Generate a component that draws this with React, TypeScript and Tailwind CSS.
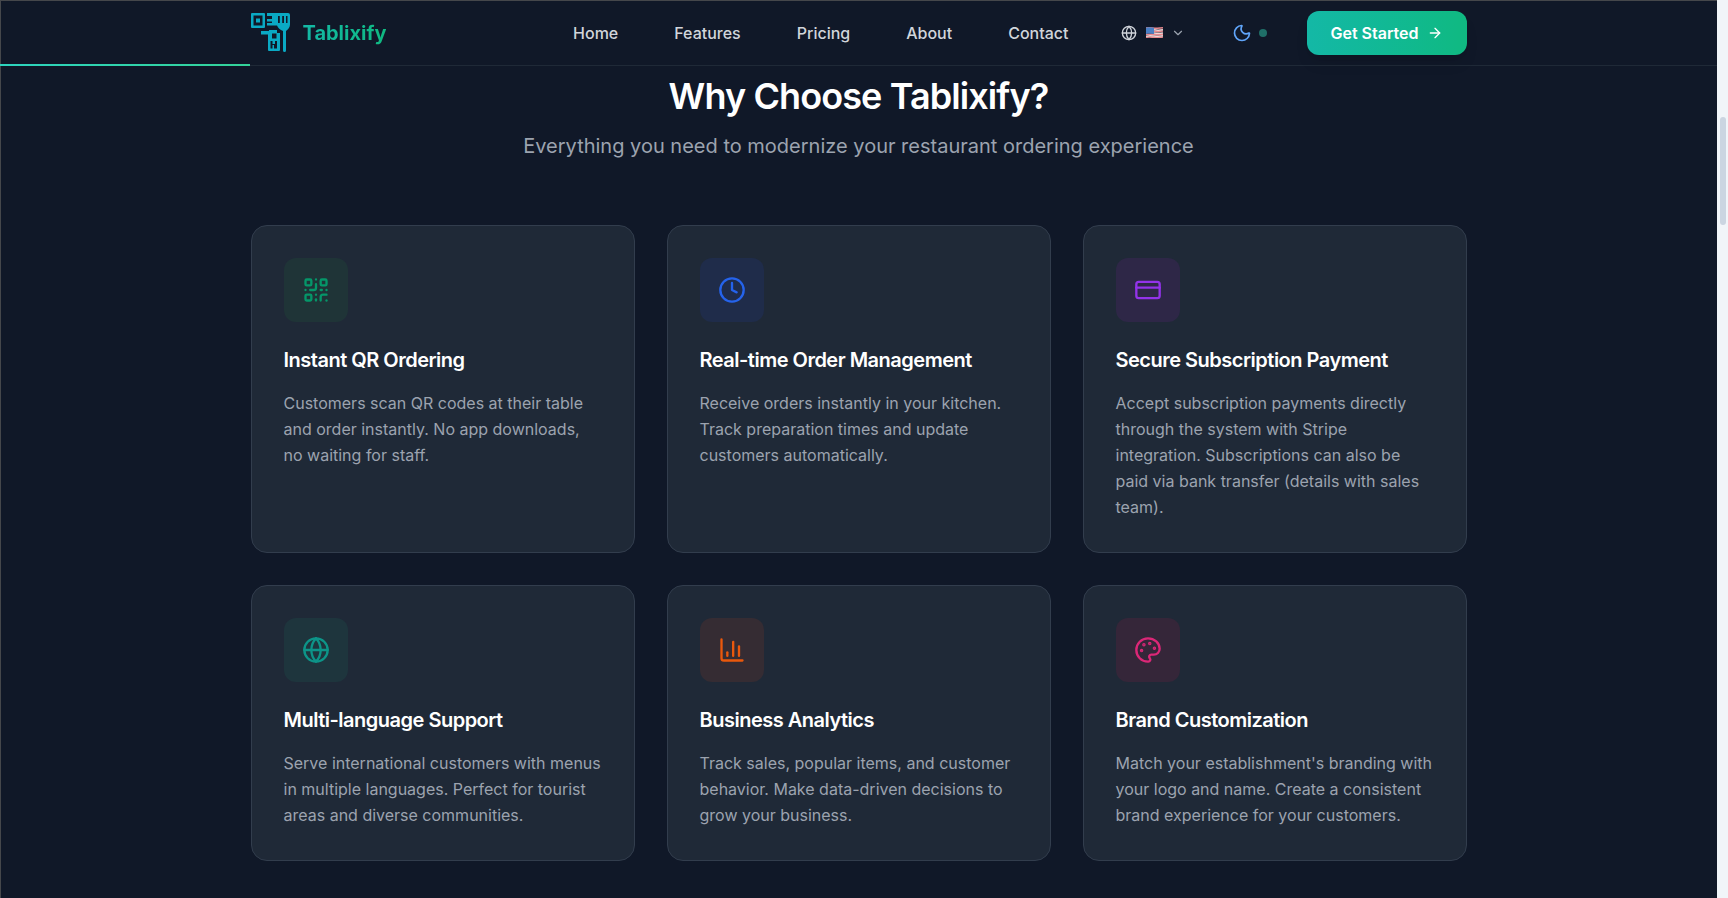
import { ArrowRight, ChartColumn, ChevronDown, Clock, CreditCard, Globe, Moon, Palette, QrCode } from "lucide-react";
import type { ReactNode } from "react";

const features: { title: string; text: string; box: string; icon: ReactNode }[] = [
  {
    title: "Instant QR Ordering",
    text: "Customers scan QR codes at their table and order instantly. No app downloads, no waiting for staff.",
    box: "bg-[#1f3437]",
    icon: <QrCode className="w-7 h-7 text-[#059669]" />,
  },
  {
    title: "Real-time Order Management",
    text: "Receive orders instantly in your kitchen. Track preparation times and update customers automatically.",
    box: "bg-[#1f2c4a]",
    icon: <Clock className="w-7 h-7 text-[#2563eb]" />,
  },
  {
    title: "Secure Subscription Payment",
    text: "Accept subscription payments directly through the system with Stripe integration. Subscriptions can also be paid via bank transfer (details with sales team).",
    box: "bg-[#2e2747]",
    icon: <CreditCard className="w-7 h-7 text-[#9333ea]" />,
  },
  {
    title: "Multi-language Support",
    text: "Serve international customers with menus in multiple languages. Perfect for tourist areas and diverse communities.",
    box: "bg-[#1e353d]",
    icon: <Globe className="w-7 h-7 text-[#0d9488]" />,
  },
  {
    title: "Business Analytics",
    text: "Track sales, popular items, and customer behavior. Make data-driven decisions to grow your business.",
    box: "bg-[#352c33]",
    icon: <ChartColumn className="w-7 h-7 text-[#ea580c]" />,
  },
  {
    title: "Brand Customization",
    text: "Match your establishment's branding with your logo and name. Create a consistent brand experience for your customers.",
    box: "bg-[#352639]",
    icon: <Palette className="w-7 h-7 text-[#db2777]" />,
  },
];

function Logo() {
  return (
    <svg viewBox="0 0 39 39" className="w-[39px] h-[39px] text-[#0aa9c4]" fill="currentColor">
      {/* qr corner */}
      <path fillRule="evenodd" d="M1 0h12a1 1 0 0 1 1 1v13a1 1 0 0 1-1 1H1a1 1 0 0 1-1-1V1a1 1 0 0 1 1-1Zm1.500 2.500v10h9v-10Zm2.500 3h4v4H5Z" />
      {/* qr middle column, runs into the fork head */}
      <path fillRule="evenodd" d="M16 0h21a2 2 0 0 1 2 2v9.500c0 3-2 5-4 6.500v19.500a1.500 1.500 0 0 1-3 0V18c-3-1-5-3-6-5.500H16V10h5V8.500h-5V6h5V3h-5Zm11 3v7h1.800V3Zm4.200 0v7H33V3Zm3.800 0v7h1.500V3Z" />
      {/* lower block */}
      <path fillRule="evenodd" d="M10 18h8v-1h8v3h3v17a1 1 0 0 1-1 1H18a1 1 0 0 1-1-1V21.500h-7Zm11 2.500v5h4.500v-5ZM19.500 28v7.500h2V32h1.500v3.500h3V28h-2v3h-2.500v-3Z" />
    </svg>
  );
}

function UsFlag() {
  return (
    <svg viewBox="0 0 17 11" className="w-[17px] h-[11px]">
      <g fill="none" strokeWidth="1.6" stroke="#e98a8f">
        <path d="M0 1.200c4-1.400 8 1 17-.4" />
        <path d="M0 4.400c4-1.400 8 1 17-.4" />
        <path d="M0 7.600c4-1.400 8 1 17-.4" />
        <path d="M0 10.400c4-1.400 8 1 17-.4" />
      </g>
      <g fill="none" strokeWidth="1.500" stroke="#f3d5d6">
        <path d="M8 2.800c3 .5 5 .6 9-.1" />
        <path d="M8 6c3 .5 5 .6 9-.1" />
        <path d="M0 9.200c6-1.200 10 .9 17-.4" />
      </g>
      <path d="M0 .8c3-.8 5-.6 8 0V7C5 6.400 3 6.300 0 7Z" fill="#4a7fc4" />
    </svg>
  );
}

export default function App() {
  return (
    <div className="flex h-[898px] overflow-hidden bg-[#f1f5f9] font-['Inter',sans-serif]">
      <div className="relative w-[1717px] shrink-0 h-full bg-[#101828] shadow-[inset_1px_1px_0_#45474b]">
        {/* Header */}
        <header className="relative h-[66px] border-b border-[#1f2937]">
          <div className="max-w-7xl mx-auto px-8 h-[65px] flex items-center justify-between">
            <div className="flex items-center gap-[13px]">
              <Logo />
              <span className="text-xl font-bold bg-gradient-to-r from-[#14b8a6] to-[#10b981] bg-clip-text text-transparent">
                Tablixify
              </span>
            </div>
            <div className="flex items-center">
              <nav className="flex items-center gap-14 text-base font-medium text-[#d1d5db]">
                <a>Home</a>
                <a>Features</a>
                <a>Pricing</a>
                <a>About</a>
                <a>Contact</a>
              </nav>
              <div className="flex items-center ml-[52px]">
                <Globe size={16} className="text-[#d1d5db]" />
                <span className="ml-[9px]">
                  <UsFlag />
                </span>
                <ChevronDown size={14} className="ml-2 text-[#9ca3af]" />
              </div>
              <div className="flex items-center ml-[47px] gap-[7px]">
                <Moon size={20} className="text-[#60a5fa]" />
                <span className="w-2 h-2 rounded-full bg-[#1f6f68]" />
              </div>
              <button className="ml-10 h-11 w-40 rounded-xl flex items-center justify-center gap-2 whitespace-nowrap text-base font-semibold text-white bg-gradient-to-r from-[#14b8a6] to-[#10b981] shadow-lg">
                Get Started
                <ArrowRight size={16} />
              </button>
            </div>
          </div>
          <div className="absolute left-0 bottom-[-1px] w-[250px] h-[2px] bg-gradient-to-r from-[#2dd4bf] to-[#34d399]" />
        </header>

        {/* Features */}
        <section className="max-w-7xl mx-auto px-8 pt-[10px]">
          <div className="text-center mb-[64.5px]">
            <h2 className="text-4xl font-semibold tracking-tight text-white mb-4">Why Choose Tablixify?</h2>
            <p className="text-xl text-[#9ca3af]">
              Everything you need to modernize your restaurant ordering experience
            </p>
          </div>
          <div className="grid grid-cols-3 gap-8">
            {features.map((f) => (
              <div key={f.title} className="p-8 rounded-2xl bg-[#1f2937] border border-[#323d4d]">
                <div className={`w-16 h-16 rounded-xl flex items-center justify-center mb-6 ${f.box}`}>
                  {f.icon}
                </div>
                <h3 className="text-xl font-semibold tracking-tight text-white mb-4">{f.title}</h3>
                <p className="text-base leading-relaxed text-[#9ca3af]">{f.text}</p>
              </div>
            ))}
          </div>
        </section>
      </div>

      {/* Scrollbar */}
      <div className="flex-1 pl-[3px] pt-[117px]">
        <div className="w-[6px] h-[108px] rounded-full bg-[#cbd5e1]" />
      </div>
    </div>
  );
}
